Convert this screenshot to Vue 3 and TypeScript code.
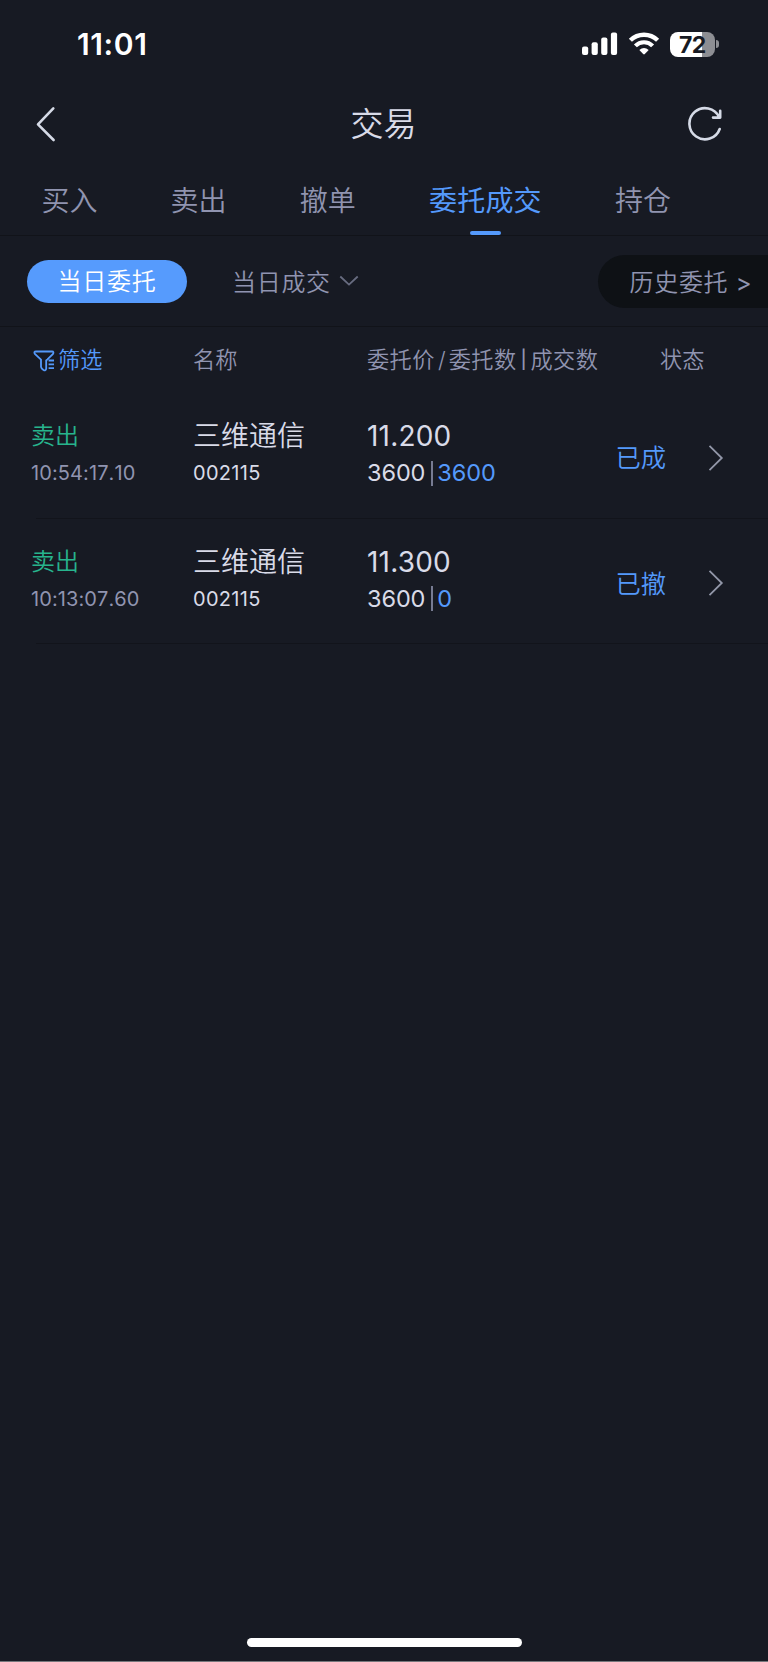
<script setup lang="ts">
import { ref } from 'vue'

interface Order {
  side: string
  time: string
  name: string
  code: string
  price: string
  amount: number
  filled: number
  status: string
}

const tabs: string[] = ['买入', '卖出', '撤单', '委托成交', '持仓']
const activeTab = ref<string>('委托成交')

const orders: Order[] = [
  { side: '卖出', time: '10:54:17.10', name: '三维通信', code: '002115', price: '11.200', amount: 3600, filled: 3600, status: '已成' },
  { side: '卖出', time: '10:13:07.60', name: '三维通信', code: '002115', price: '11.300', amount: 3600, filled: 0, status: '已撤' },
]
</script>

<template>
  <div class="screen">
    <div class="status-bar">
      <span class="clock">11:01</span>
      <div class="indicators">
        <svg class="signal" width="36" height="24" viewBox="0 0 36 24">
          <rect x="0" y="14.5" width="6.2" height="8.5" rx="2" />
          <rect x="9.6" y="10.2" width="6.2" height="12.8" rx="2" />
          <rect x="19.2" y="5.4" width="6.2" height="17.6" rx="2" />
          <rect x="28.9" y="0.5" width="6.2" height="22.5" rx="2" />
        </svg>
        <svg class="wifi" width="32" height="24" viewBox="0 0 32 24">
          <path d="M2.4 8.3 A19.4 19.4 0 0 1 29.6 8.3" fill="none" stroke="#fff" stroke-width="4.4" />
          <path d="M7.4 13.9 A12 12 0 0 1 24.6 13.9" fill="none" stroke="#fff" stroke-width="4.2" />
          <path d="M11.3 18 Q16 14.2 20.7 18 L16.8 22 Q16 22.8 15.2 22 Z" fill="#fff" />
        </svg>
        <div class="battery">
          <div class="battery-body"><span>72</span></div>
          <i class="battery-tip"></i>
        </div>
      </div>
    </div>

    <header class="nav">
      <svg width="20" height="36" viewBox="0 0 20 36">
        <path d="M17.3 2.4 L2 18.4 L17.6 34" />
      </svg>
      <h1>交易</h1>
      <svg width="36" height="36" viewBox="0 0 36 36">
        <path d="M32.7 23 A15.6 15.6 0 1 1 32.1 11 M33.2 4.8 V11.6 H26" />
      </svg>
    </header>

    <nav class="tabs">
      <button v-for="tab in tabs" :key="tab" :class="{ active: tab === activeTab }" @click="activeTab = tab">{{ tab }}</button>
    </nav>

    <div class="filters">
      <span class="pill">当日委托</span>
      <span class="today">当日成交</span>
      <svg class="caret" width="20" height="12" viewBox="0 0 20 12"><path d="M1.3 1.5 L10 9.6 L18.7 1.5" /></svg>
      <span class="history">历史委托 <b>&gt;</b></span>
    </div>

    <div class="row head">
      <div class="c-side filter">
        <svg width="22" height="22" viewBox="0 0 22 22">
          <path d="M14.4 9.4 L19.8 4.2 Q21.4 1.5 19 1.5 H3 Q0.4 1.5 1.9 3.9 L8 9.6 V16.8 Q8.2 18.4 10.5 20 Q12.7 21.2 13.2 18.8 V10.5 L14.4 9.4 M15.6 10.5 H21 M15.6 14.3 H21 M15.6 18.2 H21" />
        </svg>
        <span>筛选</span>
      </div>
      <div class="c-name">名称</div>
      <div class="c-price labels"><span>委托价</span><i>/</i><span>委托数</span><i class="bar">|</i><span>成交数</span></div>
      <div class="c-state">状态</div>
    </div>

    <div v-for="order in orders" :key="order.time" class="row order">
      <div class="c-side">
        <div class="side">{{ order.side }}</div>
        <div class="time">{{ order.time }}</div>
      </div>
      <div class="c-name">
        <div class="name">{{ order.name }}</div>
        <div class="code">{{ order.code }}</div>
      </div>
      <div class="c-price">
        <div class="price">{{ order.price }}</div>
        <div class="qty"><span>{{ order.amount }}</span><i></i><span class="filled">{{ order.filled }}</span></div>
      </div>
      <div class="c-status">{{ order.status }}</div>
      <svg width="16" height="28" viewBox="0 0 16 28"><path d="M1.5 1.8 L13.8 14 L1.5 26.2" /></svg>
    </div>

    <div class="home"><i></i></div>
  </div>
</template>

<style>
body {
  background: #171a23;
}
</style>

<style scoped>
.screen {
  width: 768px;
  height: 1662px;
  box-sizing: border-box;
  display: flex;
  flex-direction: column;
  overflow: hidden;
  background: #171a23;
  border-bottom: 1px solid #76777c;
  color: #d9dbe8;
  font-family: Inter, "Noto Sans CJK SC", sans-serif;
  font-weight: 350;
}
svg {
  display: block;
  flex: none;
}
.status-bar {
  height: 88px;
  flex: none;
  display: flex;
  justify-content: space-between;
  box-sizing: border-box;
  padding: 0 49px 0 77px;
  color: #fff;
}
.clock {
  font-size: 30px;
  line-height: 88px;
  font-weight: 600;
  letter-spacing: 0.6px;
}
.indicators {
  display: flex;
  align-items: center;
  height: 88px;
}
.signal {
  fill: #fff;
  margin-right: 10px;
}
.wifi {
  margin-right: 10px;
}
.battery {
  display: flex;
  align-items: center;
}
.battery-body {
  width: 45.5px;
  height: 25px;
  border-radius: 8px;
  background: linear-gradient(90deg, #fff 32.5px, #8d8e93 32.5px);
  color: #171a23;
  font-size: 23px;
  line-height: 26px;
  font-weight: 650;
  text-align: center;
  letter-spacing: -0.7px;
}
.battery-tip {
  width: 3px;
  height: 8px;
  margin-left: 1px;
  border-radius: 0 4px 4px 0;
  background: #8d8e93;
}
.nav {
  height: 72px;
  flex: none;
  display: flex;
  align-items: center;
  justify-content: space-between;
  padding: 0 45px 0 36px;
}
.nav svg {
  fill: none;
  stroke: #d5dae6;
  stroke-width: 2.6;
  stroke-linecap: round;
  stroke-linejoin: round;
}
.nav h1 {
  margin: 0 0 1px 24px;
  font-size: 33px;
  line-height: 48px;
  font-weight: 350;
}
.tabs {
  height: 75px;
  flex: none;
  display: flex;
  gap: 73.2px;
  padding-left: 41.4px;
  border-bottom: 1px solid #111319;
}
.tabs button {
  position: relative;
  padding: 0;
  border: 0;
  background: none;
  color: #9094b0;
  font: inherit;
  font-size: 28px;
  line-height: 82px;
  height: 75px;
  white-space: nowrap;
}
.tabs .active {
  color: #5499fb;
  font-weight: 400;
  letter-spacing: 0.2px;
}
.tabs .active::after {
  content: "";
  position: absolute;
  left: 50%;
  bottom: 0;
  width: 31px;
  height: 4px;
  margin-left: -15px;
  border-radius: 2px;
  background: #5499fb;
}
.filters {
  height: 90px;
  flex: none;
  display: flex;
  align-items: center;
  padding-left: 27px;
  border-bottom: 1px solid #111319;
  font-size: 24px;
  letter-spacing: 0.7px;
  color: #9094b0;
}
.pill {
  width: 160px;
  height: 43px;
  line-height: 44px;
  border-radius: 22px;
  background: #569bfd;
  color: #fff;
  text-align: center;
}
.today {
  margin-left: 45px;
  margin-bottom: 2px;
}
.caret {
  margin-left: 8px;
  fill: none;
  stroke: #686c80;
  stroke-width: 1.8;
}
.history {
  margin-left: auto;
  width: 170.5px;
  height: 53px;
  box-sizing: border-box;
  padding-left: 32px;
  line-height: 56px;
  border-radius: 27px 0 0 27px;
  background: #0e1115;
  white-space: nowrap;
}
.history b {
  font-weight: 400;
}
.row {
  display: grid;
  padding-left: 32px;
  flex: none;
}
.head {
  height: 66px;
  line-height: 66px;
  font-size: 22.2px;
  color: #9094b0;
  grid-template-columns: 161px 174px 293px 1fr;
}
.filter {
  display: flex;
  align-items: center;
  gap: 3px;
  padding-left: 1px;
  color: #5499fb;
}
.filter svg {
  margin-top: 1px;
  fill: none;
  stroke: #5499fb;
  stroke-width: 1.8;
}
.labels {
  display: flex;
}
.labels span {
  letter-spacing: 0.4px;
}
.labels i {
  width: 14px;
  text-align: center;
  font-style: normal;
}
.labels .bar {
  font-size: 18px;
  font-weight: 500;
}
.order {
  position: relative;
  height: 125.5px;
  grid-template-columns: 161px 174px 248.5px 92.5px 1fr;
}
.order::after {
  content: "";
  position: absolute;
  left: 36px;
  right: 0;
  bottom: 0;
  height: 1px;
  background: #12141b;
}
.order .c-side {
  margin-left: -1px;
}
.side,
.name,
.price {
  margin-top: 24px;
  height: 38px;
  line-height: 38px;
  font-size: 28px;
}
.price {
  letter-spacing: 0.2px;
  font-weight: 400;
}
.side {
  font-size: 24px;
  color: #27b48d;
}
.time,
.code,
.qty {
  height: 36px;
  line-height: 36px;
  font-size: 20px;
  font-weight: 400;
}
.time {
  color: #9094b0;
  letter-spacing: 0.1px;
  font-kerning: none;
}
.code {
  letter-spacing: 0.3px;
}
.qty {
  display: flex;
  align-items: center;
  font-size: 23.5px;
  letter-spacing: -0.1px;
}
.qty i {
  width: 2px;
  height: 25px;
  margin: 0 4px 0 6px;
  background: #777b92;
}
.filled,
.c-status {
  color: #5499fb;
}
.c-status {
  font-size: 25.3px;
  line-height: 129px;
}
.order svg {
  margin-top: 50.5px;
  fill: none;
  stroke: #9297a8;
  stroke-width: 1.8;
}
.home {
  margin-top: auto;
  height: 23px;
  display: flex;
  justify-content: center;
}
.home i {
  width: 275px;
  height: 9px;
  border-radius: 5px;
  background: #fff;
}
</style>
